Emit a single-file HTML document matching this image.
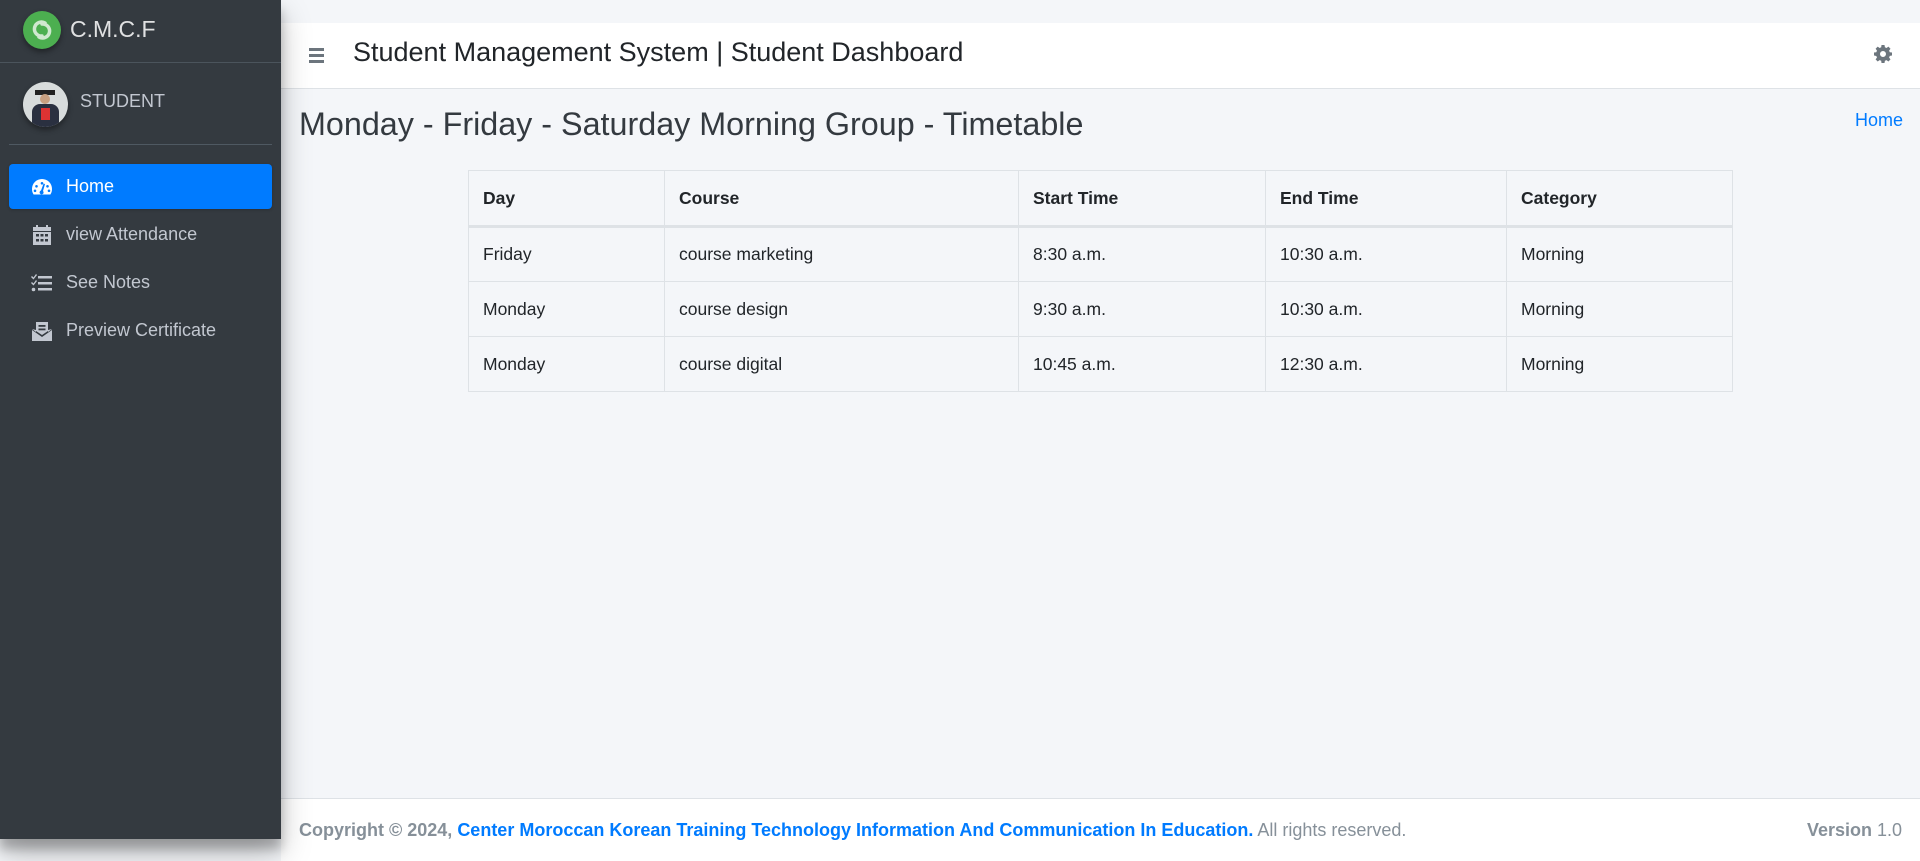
<!DOCTYPE html>
<html><head><meta charset="utf-8"><style>
*{box-sizing:border-box;margin:0;padding:0}
body{width:1920px;height:861px;overflow:hidden;background:#f4f6f9;font-family:"Liberation Sans",Arial,sans-serif;position:relative;color:#212529}
.sb{position:absolute;left:0;top:0;width:281px;height:839px;background:#343a40;box-shadow:0 14px 28px rgba(0,0,0,.25),0 10px 10px rgba(0,0,0,.22);z-index:5}
.brand{height:63px;border-bottom:1px solid #4b545c;position:relative}
.logo{position:absolute;left:23px;top:11px;width:38px;height:38px;border-radius:50%;background:#4caf50;box-shadow:0 3px 6px rgba(0,0,0,.4)}
.brand span{position:absolute;left:70px;top:16px;font-size:23px;color:rgba(255,255,255,.85)}
.user{position:absolute;left:9px;top:63px;width:263px;height:82px;border-bottom:1px solid #4f5962}
.av{position:absolute;left:14px;top:19px;width:45px;height:45px;border-radius:50%;overflow:hidden;background:#d8dcdc;box-shadow:0 3px 6px rgba(0,0,0,.4)}
.av i{position:absolute;display:block}
.user span{position:absolute;left:71px;top:28px;font-size:18px;color:#c2c7d0}
.nav{position:absolute;left:9px;top:164px;width:263px}
.it{height:45px;display:flex;align-items:center;padding-left:22px;font-size:18px;color:#c2c7d0;margin-bottom:3px;border-radius:4px}
.it svg{width:22px;height:20px;margin-right:13px;fill:#c2c7d0}
.it.on{background:#007bff;color:#fff;box-shadow:0 1px 3px rgba(0,0,0,.2)}
.it.on svg{fill:#fff}
.top{position:absolute;left:281px;top:23px;right:0;height:66px;background:#fff;border-bottom:1px solid #dee2e6}
.ham{position:absolute;left:28px;top:25px;width:15px}
.ham i{display:block;height:3px;background:#6c757d;margin-bottom:3px}
.title{position:absolute;left:72px;top:14px;font-size:27px;color:#212529}
.gear{position:absolute;left:1593px;top:22px}
h1{position:absolute;left:299px;top:106px;font-size:32.3px;font-weight:400;color:#343a40}
.hl{position:absolute;left:1855px;top:110px;font-size:18px;color:#007bff}
table{position:absolute;left:468px;top:170px;width:1265px;border-collapse:collapse;font-size:17.5px}
td,th{border:1px solid #dee2e6;padding:0 14px;text-align:left;height:55px}
th{height:56px;border-bottom:3px solid #dee2e6;font-weight:700}
.ft{position:absolute;left:281px;top:798px;right:0;height:63px;background:#fff;border-top:1px solid #dee2e6;font-size:18px;color:#869099}
.ft .l{position:absolute;left:18px;top:21px}
.ft b a{color:#007bff}
.ft .r{position:absolute;right:18px;top:21px}
</style></head><body>
<div class="sb">
 <div class="brand"><div class="logo"><svg width="38" height="38" viewBox="0 0 38 38"><path d="M22 12a7 7 0 1 0-3 13M16 26a7 7 0 1 0 3-13" stroke="#cfe8cf" stroke-width="3.5" fill="none" stroke-linecap="round"/></svg></div><span>C.M.C.F</span></div>
 <div class="user"><div class="av"><i style="left:12px;top:8px;width:20px;height:5px;background:#222"></i><i style="left:17px;top:12px;width:10px;height:10px;border-radius:50%;background:#c9a080"></i><i style="left:9px;top:22px;width:27px;height:25px;border-radius:8px 8px 0 0;background:#2a3040"></i><i style="left:18px;top:26px;width:9px;height:12px;background:#d33"></i></div><span>STUDENT</span></div>
 <div class="nav">
  <div class="it on"><svg viewBox="0 0 22 20"><path d="M11 2A10 10 0 0 0 1 12c0 2 .6 4 1.6 5.5h16.8A10 10 0 0 0 21 12 10 10 0 0 0 11 2zm0 3a1.3 1.3 0 1 1 0 2.6A1.3 1.3 0 0 1 11 5zM5.5 8a1.3 1.3 0 1 1 0 2.6 1.3 1.3 0 0 1 0-2.6zm11 0a1.3 1.3 0 1 1 0 2.6 1.3 1.3 0 0 1 0-2.6zM4 12.5a1.3 1.3 0 1 1 0 2.6 1.3 1.3 0 0 1 0-2.6zm14 0a1.3 1.3 0 1 1 0 2.6 1.3 1.3 0 0 1 0-2.6zM14 7l-2 7a2 2 0 1 1-2-.5l2.6-6.9z"/></svg>Home</div>
  <div class="it"><svg viewBox="0 0 22 20"><path d="M5 0h2v3H5zM15 0h2v3h-2zM2 2h18v4H2zM2 7h18v13H2z"/><g fill="#343a40"><rect x="5" y="9" width="3" height="2.5"/><rect x="9.5" y="9" width="3" height="2.5"/><rect x="14" y="9" width="3" height="2.5"/><rect x="5" y="14" width="3" height="2.5"/><rect x="9.5" y="14" width="3" height="2.5"/><rect x="14" y="14" width="3" height="2.5"/></g></svg>view Attendance</div>
  <div class="it"><svg viewBox="0 0 22 20"><path d="M7 3h14v2.5H7zM7 9h14v2.5H7zM7 15h14v2.5H7zM1 3l1.5 1.5L5 1l1 1-3.5 4.5L0 4zM1 9l1.5 1.5L5 7l1 1-3.5 4.5L0 10z"/><circle cx="2.5" cy="16.5" r="1.8"/></svg>See Notes</div>
  <div class="it"><svg viewBox="0 0 22 20"><path d="M5 1h12v9l-6 4-6-4zM1 8l4 3v-2zM21 8l-4 3v-2zM1 9l10 7 10-7v11H1z"/><g fill="#343a40"><rect x="7.5" y="4" width="7" height="1.8"/><rect x="7.5" y="7.5" width="7" height="1.8"/></g></svg>Preview Certificate</div>
 </div>
</div>
<div class="top">
 <div class="ham"><i></i><i></i><i></i></div>
 <div class="title">Student Management System | Student Dashboard</div>
 <svg class="gear" width="18" height="18" viewBox="0 0 18 18"><path fill="#6c757d" d="M7.5 0h3l.4 2.3 1.6.7 1.9-1.4 2.1 2.1-1.4 1.9.7 1.6 2.2.3v3l-2.2.4-.7 1.6 1.4 1.9-2.1 2.1-1.9-1.4-1.6.7-.4 2.2h-3l-.3-2.2-1.6-.7-1.9 1.4-2.1-2.1 1.4-1.9L2.3 11 0 10.5v-3l2.3-.3.7-1.6-1.4-1.9 2.1-2.1L5.6 3l1.6-.7zM9 6a3 3 0 1 0 0 6 3 3 0 0 0 0-6z"/></svg>
</div>
<h1>Monday - Friday - Saturday Morning Group - Timetable</h1>
<div class="hl">Home</div>
<table>
<colgroup><col style="width:196px"><col style="width:354px"><col style="width:247px"><col style="width:241px"><col></colgroup>
<tr><th>Day</th><th>Course</th><th>Start Time</th><th>End Time</th><th>Category</th></tr>
<tr><td>Friday</td><td>course marketing</td><td>8:30 a.m.</td><td>10:30 a.m.</td><td>Morning</td></tr>
<tr><td>Monday</td><td>course design</td><td>9:30 a.m.</td><td>10:30 a.m.</td><td>Morning</td></tr>
<tr><td>Monday</td><td>course digital</td><td>10:45 a.m.</td><td>12:30 a.m.</td><td>Morning</td></tr>
</table>
<div class="ft"><div class="l"><b>Copyright © 2024, <a>Center Moroccan Korean Training Technology Information And Communication In Education.</a></b> All rights reserved.</div><div class="r"><b>Version</b> 1.0</div></div>
</body></html>
